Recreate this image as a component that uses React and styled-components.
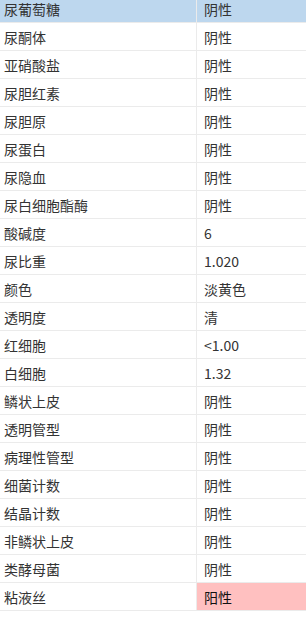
import React from "react";
import styled, { createGlobalStyle } from "styled-components";

const GlobalStyle = createGlobalStyle`
  html, body {
    margin: 0;
    padding: 0;
    background: #fff;
  }
  body {
    font-family: "Noto Sans CJK SC", "Liberation Sans", sans-serif;
  }
`;

const Viewport = styled.div`
  width: 306px;
  height: 640px;
  overflow: hidden;
`;

const Table = styled.div`
  margin-top: -5px;
`;

const Row = styled.div`
  display: grid;
  grid-template-columns: 197px 109px;
  height: 28px;
  box-sizing: border-box;
  border-bottom: 1px solid #ebebeb;
  background: ${(p) => (p.$selected ? "#bdd7ee" : "#fff")};
`;

const Cell = styled.div`
  display: flex;
  align-items: center;
  box-sizing: border-box;
  padding-left: ${(p) => (p.$value ? "7px" : "4px")};
  border-right: ${(p) => (p.$value ? "none" : "1px solid #ebebeb")};
  font-size: 14px;
  color: ${(p) => (p.$alert ? "#111" : "#333")};
  background: ${(p) => (p.$alert ? "#ffc0c0" : "transparent")};
  white-space: nowrap;
`;

const items = [
  ["尿葡萄糖", "阴性"],
  ["尿酮体", "阴性"],
  ["亚硝酸盐", "阴性"],
  ["尿胆红素", "阴性"],
  ["尿胆原", "阴性"],
  ["尿蛋白", "阴性"],
  ["尿隐血", "阴性"],
  ["尿白细胞酯酶", "阴性"],
  ["酸碱度", "6"],
  ["尿比重", "1.020"],
  ["颜色", "淡黄色"],
  ["透明度", "清"],
  ["红细胞", "<1.00"],
  ["白细胞", "1.32"],
  ["鳞状上皮", "阴性"],
  ["透明管型", "阴性"],
  ["病理性管型", "阴性"],
  ["细菌计数", "阴性"],
  ["结晶计数", "阴性"],
  ["非鳞状上皮", "阴性"],
  ["类酵母菌", "阴性"],
  ["粘液丝", "阳性"],
];

export default function App() {
  return (
    <Viewport>
      <GlobalStyle />
      <Table>
        {items.map(([name, value], i) => (
          <Row key={name} $selected={i === 0}>
            <Cell>{name}</Cell>
            <Cell $value $alert={value === "阳性"}>
              {value}
            </Cell>
          </Row>
        ))}
      </Table>
    </Viewport>
  );
}
